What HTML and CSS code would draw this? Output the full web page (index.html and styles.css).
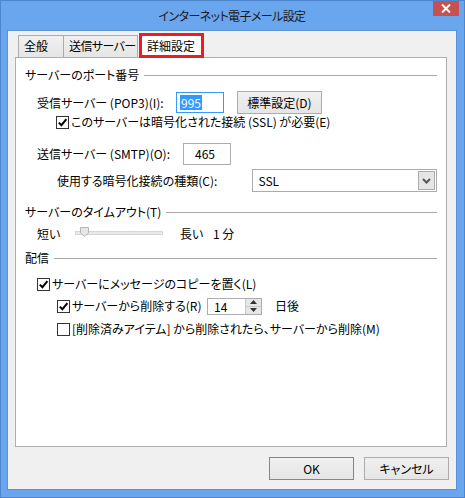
FILE: index.html
```html
<!DOCTYPE html>
<html lang="ja">
<head>
<meta charset="utf-8">
<link rel="stylesheet" href="styles.css">
</head>
<body>
<div class="window">
  <div class="titlebar">
    <span></span>
    <div class="title">インターネット電子メール設定</div>
    <div class="close"><svg width="10" height="9" viewBox="0 0 10 9"><path d="M1 0.5 L9 8.5 M9 0.5 L1 8.5" stroke="#fff" stroke-width="2"/></svg></div>
  </div>
  <div class="client">
    <div class="tabs">
      <div class="tab">全般</div>
      <div class="tab tab-send">送信サーバー</div>
      <div class="tab active">詳細設定</div>
    </div>
    <div class="panel">
      <div class="group-head"><span>サーバーのポート番号</span><i class="rule"></i></div>

      <div class="row row-pop lvl1">
        <span class="lbl lbl-pop">受信サーバー (POP3)(I):</span>
        <div class="textbox focus"><span class="sel">995</span></div>
        <button class="btn btn-std">標準設定(D)</button>
      </div>

      <div class="row row-ssl lvl2b">
        <span class="cb checked"><svg width="11" height="11" viewBox="0 0 11 11"><path d="M1.8 5.6 L4.4 8.2 L9.4 2.2" fill="none" stroke="#000" stroke-width="2"/></svg></span>
        <span class="cbtext">このサーバーは暗号化された接続 (SSL) が必要(E)</span>
      </div>

      <div class="row row-smtp lvl1">
        <span class="lbl lbl-smtp">送信サーバー (SMTP)(O):</span>
        <div class="textbox tall">465</div>
      </div>

      <div class="row row-enc lvl2">
        <span class="lbl lbl-enc">使用する暗号化接続の種類(C):</span>
        <div class="select">
          <span class="seltext">SSL</span>
          <span class="drop"><svg width="9" height="6" viewBox="0 0 9 6"><path d="M1 1 L4.5 4.5 L8 1" fill="none" stroke="#555" stroke-width="2"/></svg></span>
        </div>
      </div>

      <div class="group-head gh-timeout"><span>サーバーのタイムアウト(T)</span><i class="rule"></i></div>

      <div class="row row-slider lvl1">
        <span class="lbl lbl-short">短い</span>
        <div class="track"><span class="thumb"><svg width="9" height="10" viewBox="0 0 9 10"><path d="M0.5 0.5 H8.5 V6 L4.5 9.5 L0.5 6 Z" fill="#e6e6e6" stroke="#b5b5b5"/></svg></span></div>
        <span class="lbl lbl-long">長い</span>
        <span class="lbl">1 分</span>
      </div>

      <div class="group-head gh-deliv"><span>配信</span><i class="rule"></i></div>

      <div class="row row-cb1 lvl1">
        <span class="cb checked"><svg width="11" height="11" viewBox="0 0 11 11"><path d="M1.8 5.6 L4.4 8.2 L9.4 2.2" fill="none" stroke="#000" stroke-width="2"/></svg></span>
        <span class="cbtext">サーバーにメッセージのコピーを置く(L)</span>
      </div>

      <div class="row row-cb2 lvl2">
        <div class="cbwrap">
          <span class="cb checked"><svg width="11" height="11" viewBox="0 0 11 11"><path d="M1.8 5.6 L4.4 8.2 L9.4 2.2" fill="none" stroke="#000" stroke-width="2"/></svg></span>
          <span class="cbtext">サーバーから削除する(R)</span>
        </div>
        <div class="spin">
          <span class="spinval">14</span>
          <span class="spinbtns">
            <span class="sb"><svg width="7" height="4" viewBox="0 0 7 4"><path d="M0 4 L3.5 0 L7 4 Z" fill="#333"/></svg></span>
            <span class="sb"><svg width="7" height="4" viewBox="0 0 7 4"><path d="M0 0 L3.5 4 L7 0 Z" fill="#333"/></svg></span>
          </span>
        </div>
        <span class="lbl lbl-days">日後</span>
      </div>

      <div class="row row-cb3 lvl2">
        <span class="cb"></span>
        <span class="cbtext">[削除済みアイテム] から削除されたら、サーバーから削除(M)</span>
      </div>
    </div>
    <div class="actions">
      <button class="btn btn-dlg default">OK</button>
      <button class="btn btn-dlg">キャンセル</button>
    </div>
  </div>
</div>
</body>
</html>
```

FILE: styles.css
```css
* { box-sizing: border-box; }
html, body { margin: 0; padding: 0; }
body {
  width: 465px;
  height: 498px;
  overflow: hidden;
  font-family: "Noto Sans CJK JP", "Noto Sans", sans-serif;
  font-size: 12px;
  font-feature-settings: "palt";
  color: #000;
  background: #6aa6ee;
}
.window {
  width: 465px;
  height: 498px;
  border: 1px solid #4d86cc;
  background: #6aa6ee;
  padding: 0 7px 0 6px;
}
.titlebar {
  height: 29px;
  display: grid;
  grid-template-columns: 1fr auto 1fr;
  align-items: start;
}
.title {
  padding-top: 6px;
  font-size: 12px;
  line-height: 18px;
  color: #1a1a1a;
  letter-spacing: -0.6px;
  white-space: nowrap;
}
.close {
  justify-self: end;
  margin-right: -2px;
  width: 26px;
  height: 15px;
  background: #c75050;
  display: flex;
  align-items: center;
  justify-content: center;
}
.client {
  height: 460px;
  border: 1px solid #5b92d6;
  background: #f0f0f0;
  display: flex;
  flex-direction: column;
}
.tabs {
  display: flex;
  align-items: flex-end;
  height: 26px;
  margin-top: 1px;
  padding-left: 10px;
  position: relative;
  z-index: 1;
  margin-bottom: -1px;
}
.tab {
  height: 22px;
  border: 1px solid #acacac;
  border-bottom: none;
  background: linear-gradient(#f0f0f0, #e5e5e5);
  line-height: 20px;
  padding: 0 5px;
  margin-bottom: 1px;
  white-space: nowrap;
  overflow: hidden;
}
.tab + .tab { border-left: none; }
.tab:nth-child(1) { width: 46px; }
.tab-send { width: 74px; padding: 0 0 0 5px; letter-spacing: -0.6px; }
.tab.active {
  width: 65px;
  height: 25px;
  margin-bottom: 0;
  margin-left: 1px;
  background: #fff;
  border: 3px solid #ec1c24;
  line-height: 20px;
  padding: 0 0 0 5px;
}
.panel {
  margin-left: 7px;
  width: 432px;
  height: 390px;
  background: #fff;
  border: 1px solid #adadad;
  padding: 9px 9px 0 9px;
}
.group-head {
  height: 16px;
  display: flex;
  align-items: center;
  line-height: 16px;
}
.group-head .rule {
  flex: 1;
  height: 1px;
  background: #a8a8a8;
  margin-left: 5px;
  margin-top: 1px;
}
.row {
  display: flex;
  align-items: center;
  line-height: 16px;
}
.lvl1 { padding-left: 12px; }
.lvl2 { padding-left: 32px; }
.lvl2b { padding-left: 31px; }
.lbl { white-space: nowrap; }
.row-pop { height: 23px; margin-top: 8px; }
.lbl-pop { width: 139px; }
.textbox {
  width: 48px;
  height: 21px;
  border: 1px solid #abadb3;
  background: #fff;
  padding-left: 3px;
  display: flex;
  align-items: center;
}
.textbox.tall { height: 22px; padding-left: 11px; }
.textbox.focus { border-color: #3399ff; margin-right: 13px; }
.sel {
  background: #3399ff;
  color: #fff;
  padding: 0 1px;
  line-height: 15px;
}
.btn {
  font-family: inherit;
  font-size: 12px;
  font-feature-settings: "palt";
  color: #000;
  background: linear-gradient(#f0f0f0, #e5e5e5);
  border: 1px solid #acacac;
  padding: 0;
  margin: 0;
}
.btn-std { width: 85px; height: 23px; }
.row-ssl { height: 14px; margin-top: 1px; }
.cb {
  width: 13px;
  height: 13px;
  border: 1px solid #333;
  background: #fff;
  display: flex;
  align-items: center;
  justify-content: center;
  flex: none;
}
.cbtext { margin-left: 2px; white-space: nowrap; }
.row-smtp { height: 22px; margin-top: 14px; }
.lbl-smtp { width: 146px; }
.row-enc { height: 23px; margin-top: 4px; }
.lbl-enc { width: 196px; }
.select {
  width: 185px;
  height: 23px;
  border: 1px solid #acacac;
  background: #fff;
  display: flex;
  align-items: center;
  justify-content: space-between;
  padding: 1px;
}
.seltext { padding-left: 4px; }
.drop {
  width: 17px;
  height: 19px;
  background: #e5e5e5;
  border: 1px solid #acacac;
  display: flex;
  align-items: center;
  justify-content: center;
}
.gh-timeout { margin-top: 12px; }
.row-slider { height: 16px; margin-top: 6px; }
.lbl-short { width: 38px; }
.track {
  width: 88px;
  height: 4px;
  background: #e7eaea;
  border: 1px solid #d6d6d6;
  position: relative;
  margin-right: 17px;
  margin-top: -2px;
}
.thumb {
  position: absolute;
  left: 4px;
  top: -5px;
  display: block;
  line-height: 0;
}
.lbl-long { width: 33px; }
.gh-deliv { margin-top: 8px; }
.row-cb1 { height: 16px; margin-top: 10px; }
.row-cb2 { height: 20px; margin-top: 4px; }
.cbwrap { width: 150px; display: flex; align-items: center; }
.spin {
  width: 55px;
  height: 17px;
  border: 1px solid #abadb3;
  display: flex;
  align-items: stretch;
  justify-content: space-between;
}
.spinval { padding-left: 6px; line-height: 15px; }
.spinbtns {
  width: 16px;
  display: flex;
  flex-direction: column;
  border-left: 1px solid #c8c8c8;
}
.sb {
  flex: 1;
  background: #e6e6e6;
  display: flex;
  align-items: center;
  justify-content: center;
}
.sb + .sb { border-top: 1px solid #c8c8c8; }
.lbl-days { margin-left: 13px; }
.row-cb3 { height: 16px; margin-top: 5px; }
.actions {
  display: flex;
  justify-content: flex-end;
  gap: 10px;
  padding-right: 7px;
  margin-top: 10px;
}
.btn-dlg { width: 85px; height: 23px; }
.btn-dlg.default { border-color: #3399ff; }
```
